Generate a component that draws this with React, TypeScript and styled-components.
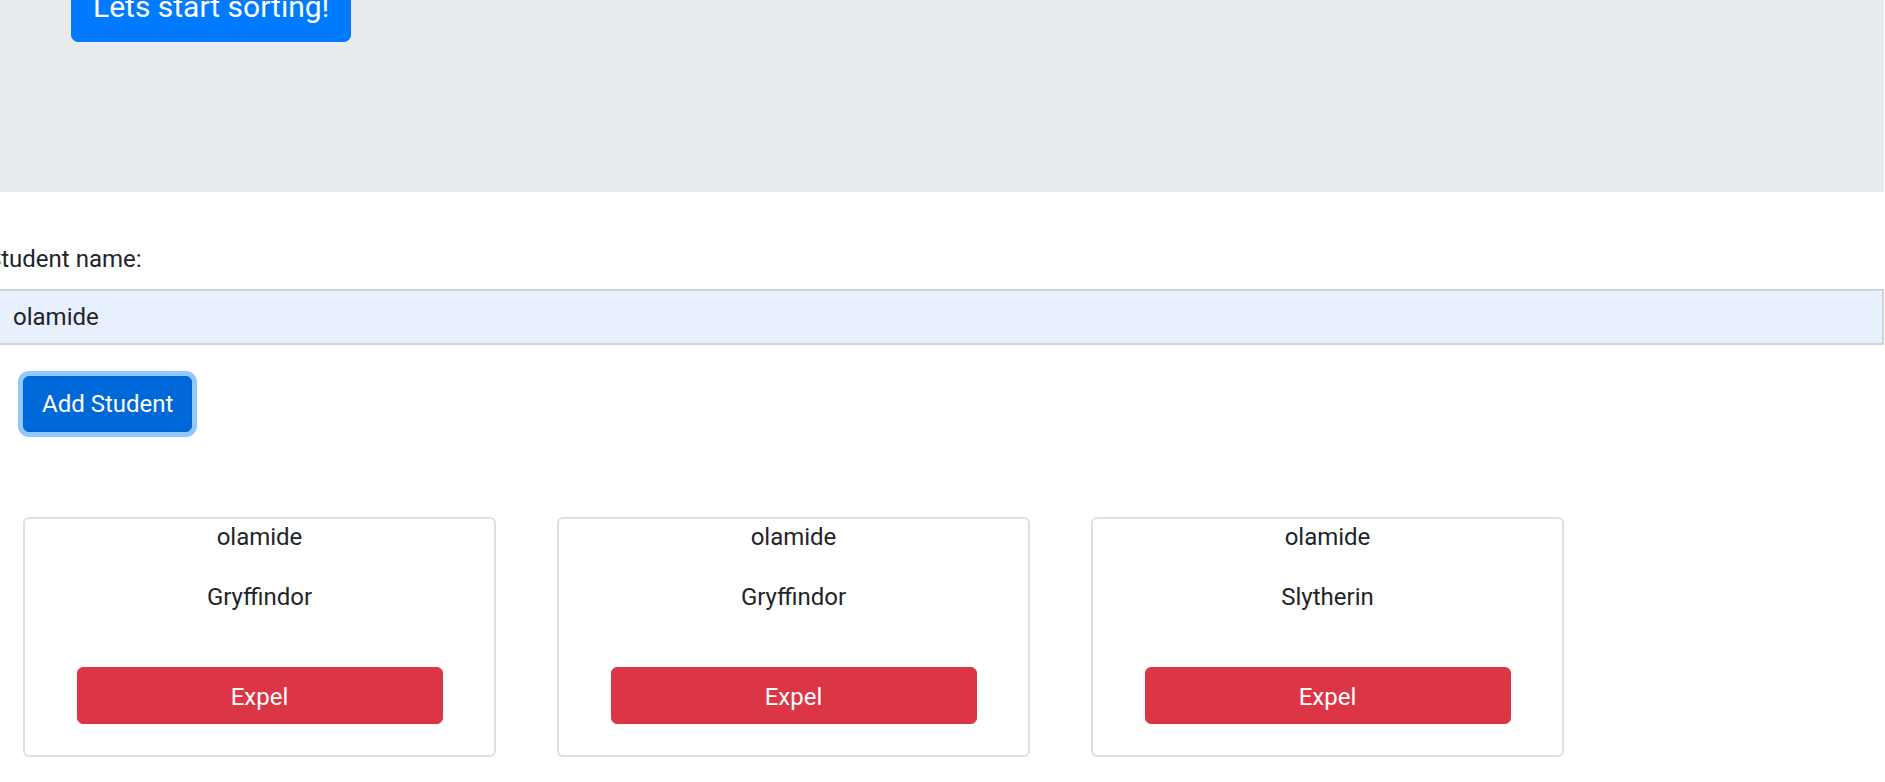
import React from "react";
import styled, { createGlobalStyle } from "styled-components";

const GlobalStyle = createGlobalStyle`
  html, body { margin: 0; padding: 0; background: #ffffff; overflow: hidden; }
  body {
    font-family: "Segoe UI", Roboto, "Liberation Sans", sans-serif;
    font-size: 24px;
    line-height: 1.5;
    color: #212529;
  }
  * { box-sizing: border-box; }
`;

/* The viewport shows the page scrolled a little down */
const Viewport = styled.div`
  margin: -29px 1px 0 0;
  display: flex;
  flex-direction: column;
`;

const Jumbotron = styled.header`
  background: #e9ecef;
  padding: 0 0 150px 71px;
  margin-bottom: 49px;
`;

const HeroButton = styled.button`
  font-family: inherit;
  font-size: 30px;
  line-height: 45px;
  color: #ffffff;
  background: #007bff;
  border: 1.5px solid #007bff;
  border-radius: 7px;
  padding: 12px 21px;
  cursor: pointer;
`;

const Form = styled.form`
  display: flex;
  flex-direction: column;
  margin-left: -10px;
`;

const Label = styled.label`
  display: block;
  line-height: 36px;
  margin-bottom: 12px;
  margin-left: -3px;
`;

const NameInput = styled.input`
  display: block;
  width: 100%;
  height: 56px;
  padding: 0 21px;
  font-family: inherit;
  font-size: 24px;
  color: #212529;
  background: #e8f0fe;
  border: 2px solid #ced4da;
  border-radius: 0;
  outline: none;
`;

const AddButton = styled.button`
  align-self: flex-start;
  margin: 31px 0 0 33px;
  height: 56px;
  padding: 0 18px;
  font-family: inherit;
  font-size: 24px;
  line-height: 36px;
  color: #ffffff;
  background: #0069d9;
  border: 1.5px solid #0062cc;
  border-radius: 6px;
  box-shadow: 0 0 0 5px rgba(38, 143, 255, 0.5);
  cursor: pointer;
`;

const CardRow = styled.section`
  display: flex;
  gap: 61px;
  padding: 85px 0 0 23px;
`;

const Card = styled.article`
  width: 473px;
  height: 240px;
  border: 2px solid #dfdfdf;
  border-radius: 6px;
  display: flex;
  flex-direction: column;
  align-items: center;
  text-align: center;
`;

const StudentName = styled.p`
  margin: 0 0 24px;
  line-height: 36px;
`;

const House = styled.p`
  margin: 0 0 52px;
  line-height: 36px;
`;

const ExpelButton = styled.button`
  width: 366px;
  height: 57px;
  padding: 2px 0 0;
  font-family: inherit;
  font-size: 24px;
  color: #ffffff;
  background: #dc3545;
  border: 1.5px solid #dc3545;
  border-radius: 6px;
  cursor: pointer;
`;

const students = [
  { name: "olamide", house: "Gryffindor" },
  { name: "olamide", house: "Gryffindor" },
  { name: "olamide", house: "Slytherin" },
];

export default function App() {
  return (
    <>
      <GlobalStyle />
      <Viewport>
        <Jumbotron>
          <HeroButton type="button">Lets start sorting!</HeroButton>
        </Jumbotron>
        <Form onSubmit={(e) => e.preventDefault()}>
          <Label htmlFor="student-name">Student name:</Label>
          <NameInput id="student-name" defaultValue="olamide" />
          <AddButton type="submit">Add Student</AddButton>
        </Form>
        <CardRow>
          {students.map((s, i) => (
            <Card key={i}>
              <StudentName>{s.name}</StudentName>
              <House>{s.house}</House>
              <ExpelButton type="button">Expel</ExpelButton>
            </Card>
          ))}
        </CardRow>
      </Viewport>
    </>
  );
}
